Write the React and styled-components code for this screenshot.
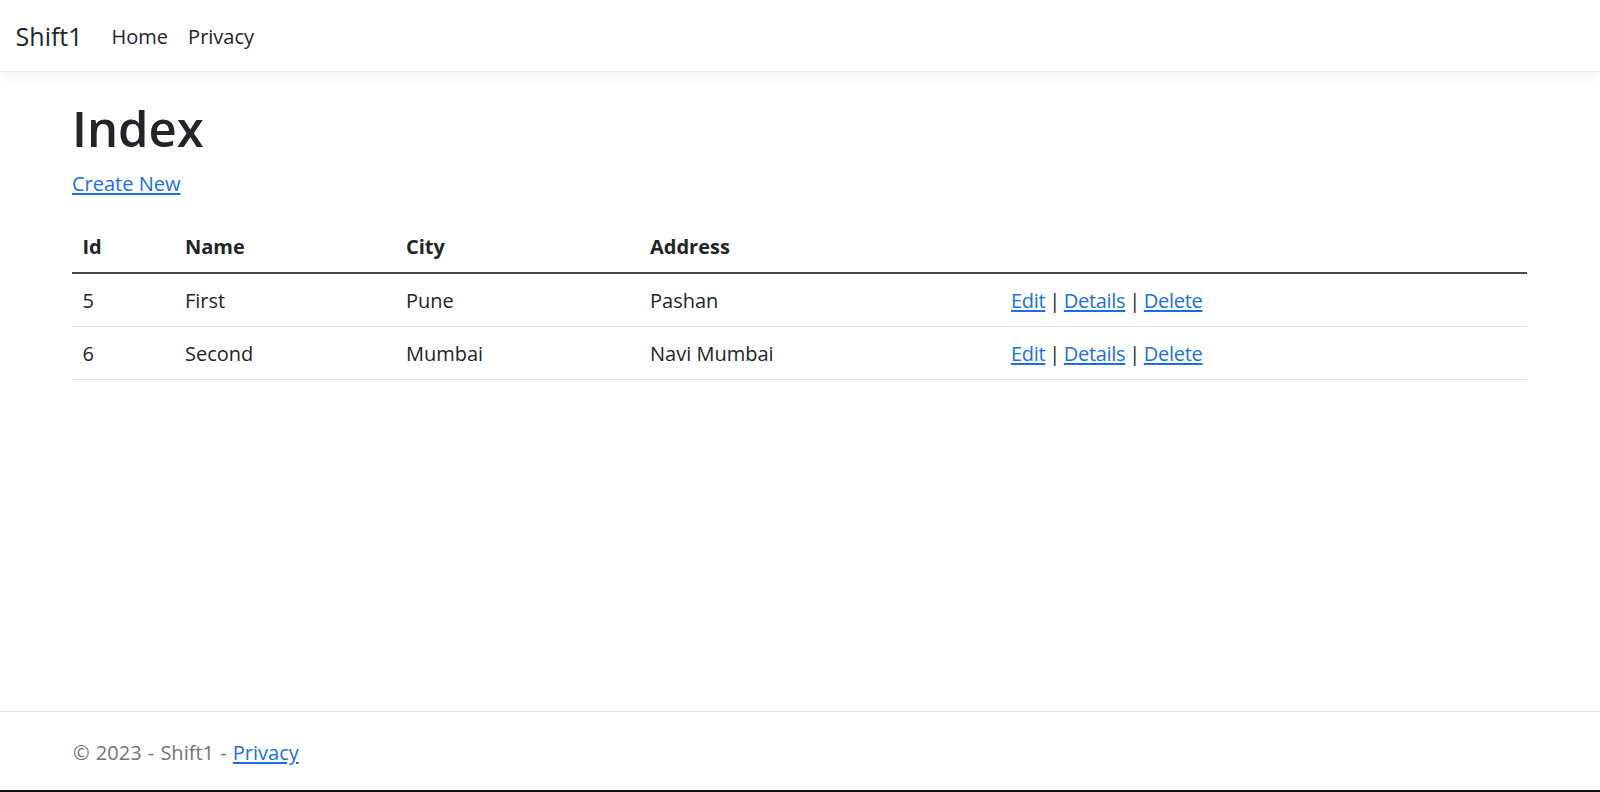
import React from "react";
import styled, { createGlobalStyle } from "styled-components";

const Global = createGlobalStyle`
  *, *::before, *::after { box-sizing: border-box; }
  html, body { margin: 0; padding: 0; }
  body {
    font-family: "Open Sans", "Noto Sans", "DejaVu Sans", sans-serif;
    font-size: 20px;
    line-height: 1.5;
    color: #212529;
    background: #fff;
  }
`;

const Page = styled.div`
  min-height: 100vh;
  display: flex;
  flex-direction: column;
  border-bottom: 2px solid #111;
`;

const NavBar = styled.header`
  display: flex;
  align-items: center;
  height: 72px;
  padding: 2px 15.6px 0;
  background: #fff;
  border-bottom: 1px solid #e9ecef;
  box-shadow: 0 5px 15px rgba(0, 0, 0, 0.05);
  position: relative;
  z-index: 1;
`;

const Brand = styled.a`
  font-size: 25px;
  line-height: 1.5;
  color: #212529;
  text-decoration: none;
  margin-right: 19px;
`;

const NavList = styled.nav`
  display: flex;
  align-items: center;
`;

const NavLink = styled.a`
  color: #212529;
  text-decoration: none;
  padding: 0 10px;
  font-size: 20px;
`;

const Main = styled.main`
  flex: 1;
  padding: 26px 0 0 72px;
  width: 1527px;
`;

const Title = styled.h1`
  font-size: 49px;
  font-weight: 600;
  line-height: 61px;
  margin: 0 0 10.4px;
`;

const Para = styled.p`
  margin: 0 0 20.8px;
`;

const Link = styled.a`
  color: #1a6fe3;
  text-decoration: underline;
  text-underline-offset: 2px;
`;

const Table = styled.table`
  width: 100%;
  border-collapse: collapse;
  table-layout: fixed;
`;

const Th = styled.th`
  text-align: left;
  font-weight: 700;
  padding: 10.5px;
  line-height: 31px;
  border-bottom: 2px solid #4a4a4a;
`;

const Td = styled.td`
  padding: 10.5px;
  line-height: 31px;
  border-bottom: 1px solid #dee2e6;
`;

const Actions = styled(Td)`
  letter-spacing: -0.3px;
  word-spacing: -1px;
`;

const Sep = styled.span`
  color: #212529;
`;

const Footer = styled.footer`
  border-top: 1px solid #dee2e6;
  padding: 4px 0 0 73px;
  line-height: 74px;
  color: #6c757d;
  font-size: 20px;
  word-spacing: 1px;
`;

const rows = [
  { id: 5, name: "First", city: "Pune", address: "Pashan" },
  { id: 6, name: "Second", city: "Mumbai", address: "Navi Mumbai" },
];

const widths = [102.5, 221, 244, 361, 526.5];

export default function App() {
  return (
    <>
      <Global />
      <Page>
        <NavBar>
          <Brand href="#">Shift1</Brand>
          <NavList>
            <NavLink href="#">Home</NavLink>
            <NavLink href="#">Privacy</NavLink>
          </NavList>
        </NavBar>
        <Main>
          <Title>Index</Title>
          <Para>
            <Link href="#">Create New</Link>
          </Para>
          <Table>
            <colgroup>
              {widths.map((w, i) => (
                <col key={i} style={{ width: w }} />
              ))}
            </colgroup>
            <thead>
              <tr>
                <Th>Id</Th>
                <Th>Name</Th>
                <Th>City</Th>
                <Th>Address</Th>
                <Th></Th>
              </tr>
            </thead>
            <tbody>
              {rows.map((r) => (
                <tr key={r.id}>
                  <Td>{r.id}</Td>
                  <Td>{r.name}</Td>
                  <Td>{r.city}</Td>
                  <Td>{r.address}</Td>
                  <Actions>
                    <Link href="#">Edit</Link> <Sep>|</Sep>{" "}
                    <Link href="#">Details</Link> <Sep>|</Sep>{" "}
                    <Link href="#">Delete</Link>
                  </Actions>
                </tr>
              ))}
            </tbody>
          </Table>
        </Main>
        <Footer>
          © 2023 - Shift1 - <Link href="#">Privacy</Link>
        </Footer>
      </Page>
    </>
  );
}
